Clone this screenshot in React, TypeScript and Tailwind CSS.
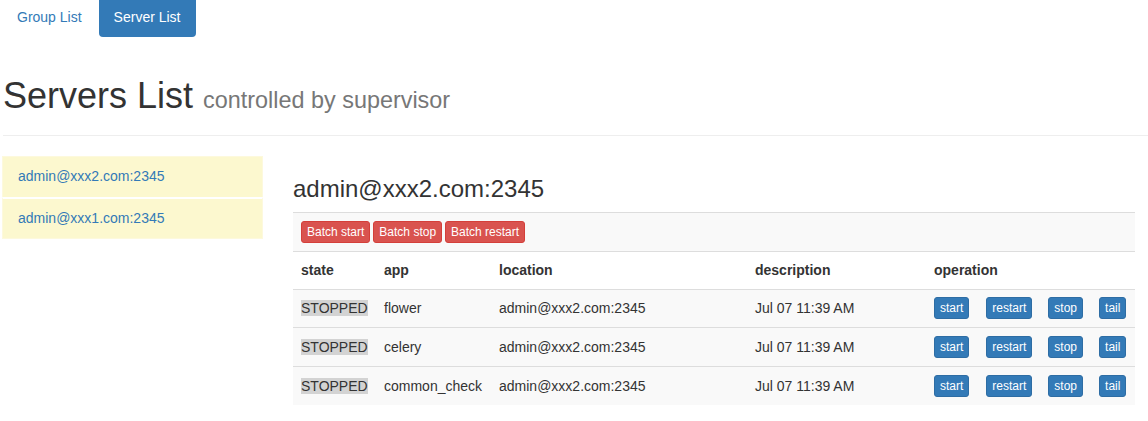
import React from "react";

const font = { fontFamily: '"Liberation Sans", Arial, sans-serif' };

function BtnDanger({ children }: { children: React.ReactNode }) {
  return (
    <button className="inline-block h-[22px] px-[5px] text-[12px] leading-[20px] text-white bg-[#d9534f] border border-[#d43f3a] rounded-[3px] mr-[3px] align-middle">
      {children}
    </button>
  );
}

function BtnPrimary({ children, className = "" }: { children: React.ReactNode; className?: string }) {
  return (
    <button className={"inline-block h-[22px] px-[5px] text-[12px] leading-[20px] text-white bg-[#337ab7] border border-[#2e6da4] rounded-[3px] align-middle " + className}>
      {children}
    </button>
  );
}

const rows = ["flower", "celery", "common_check"];

export default function App() {
  return (
    <div className="bg-white text-[14px] leading-[20px] text-[#333] min-h-[421px]" style={font}>
      {/* nav pills */}
      <ul className="flex -mt-[3px] h-[40px]">
        <li className="pl-[2px]">
          <a className="block px-[15px] py-[10px] text-[#337ab7] rounded-[4px]">Group List</a>
        </li>
        <li className="ml-[2px]">
          <a className="block px-[15px] py-[10px] text-white bg-[#337ab7] rounded-[4px]">Server List</a>
        </li>
      </ul>

      {/* page header */}
      <div className="mt-[39px] mb-[20px] pb-[9px] border-b border-[#eee] ml-[3px]">
        <h1 className="text-[36px] leading-[39.6px] font-normal mb-[10px]">
          Servers List{" "}
          <small className="text-[23.4px] leading-none text-[#777]">controlled by supervisor</small>
        </h1>
      </div>

      <div className="flex">
        {/* left list */}
        <div className="w-[261px] ml-[2px] shrink-0">
          <div className="flex flex-col">
            <a className="block h-[42px] px-[15px] py-[9px] bg-[#fcf8cf] text-[#337ab7] border border-[#fdf9dd]">
              admin@xxx2.com:2345
            </a>
            <a className="block h-[42px] px-[15px] py-[9px] -mt-px bg-[#fcf8cf] text-[#337ab7] border border-[#fdf9dd] border-t-white border-t-[2px]">
              admin@xxx1.com:2345
            </a>
          </div>
        </div>

        {/* right */}
        <div className="ml-[30px] w-[842px]">
          <h3 className="text-[24px] leading-[26.4px] font-normal mt-[20px] mb-[10px]">admin@xxx2.com:2345</h3>
          <table className="w-[842px] table-fixed border-collapse">
            <colgroup>
              <col className="w-[83px]" />
              <col className="w-[115px]" />
              <col className="w-[256px]" />
              <col className="w-[179px]" />
              <col className="w-[209px]" />
            </colgroup>
            <tbody>
              <tr className="bg-[#f9f9f9] border-t border-[#ddd]">
                <td colSpan={5} className="p-[8px] h-[38px]">
                  <div className="flex">
                    <BtnDanger>Batch start</BtnDanger>
                    <BtnDanger>Batch stop</BtnDanger>
                    <BtnDanger>Batch restart</BtnDanger>
                  </div>
                </td>
              </tr>
              <tr className="border-t border-[#ddd]">
                {["state", "app", "location", "description", "operation"].map((h) => (
                  <th key={h} className="text-left font-bold p-[8px] h-[37.5px]">
                    {h}
                  </th>
                ))}
              </tr>
              {rows.map((r) => (
                <tr key={r} className="bg-[#f9f9f9] border-t border-[#ddd]">
                  <td className="px-[8px] h-[38.6px]">
                    <span className="bg-[#d3d3d3]">STOPPED</span>
                  </td>
                  <td className="px-[8px]">{r}</td>
                  <td className="px-[8px]">admin@xxx2.com:2345</td>
                  <td className="px-[8px]">Jul 07 11:39 AM</td>
                  <td className="px-[8px]">
                    <div className="flex">
                      <BtnPrimary>start</BtnPrimary>
                      <BtnPrimary className="ml-[17px]">restart</BtnPrimary>
                      <BtnPrimary className="ml-[16px]">stop</BtnPrimary>
                      <BtnPrimary className="ml-[16px]">tail</BtnPrimary>
                    </div>
                  </td>
                </tr>
              ))}
            </tbody>
          </table>
        </div>
      </div>
    </div>
  );
}
